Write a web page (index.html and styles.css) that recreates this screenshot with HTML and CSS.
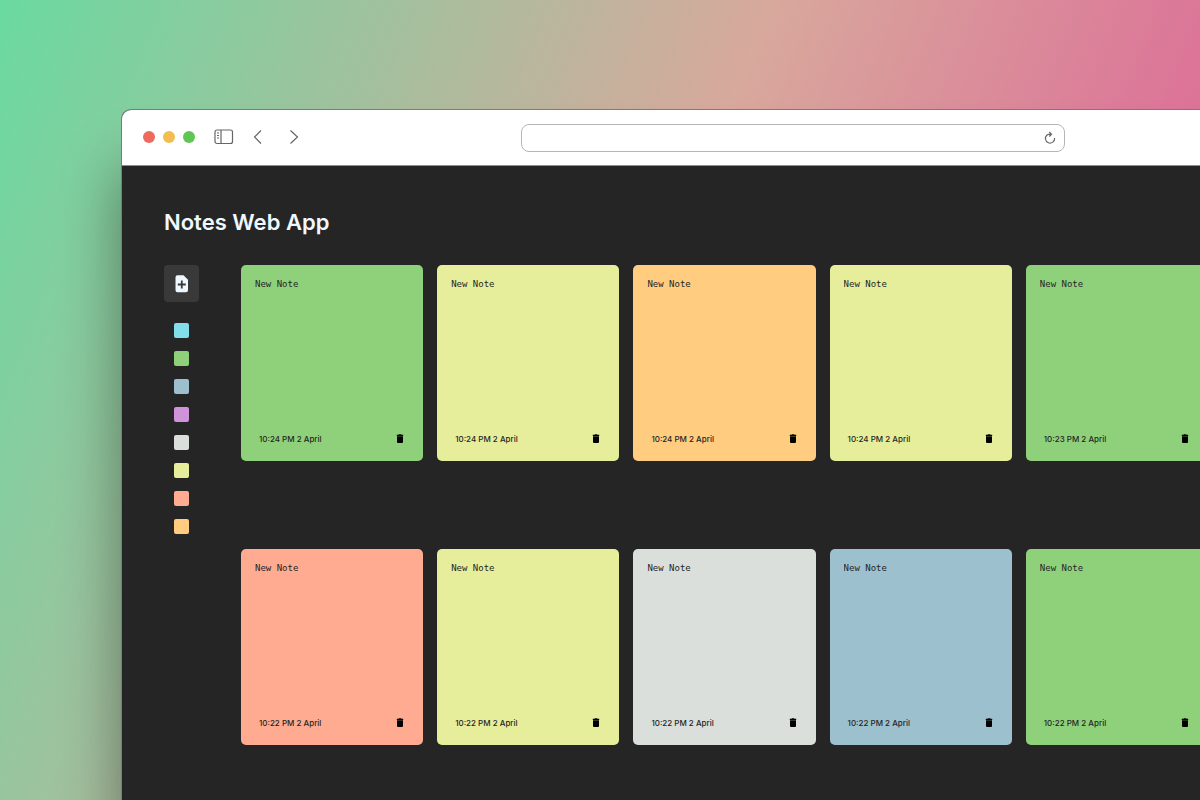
FILE: index.html
```html
<!DOCTYPE html>
<html lang="en">
<head>
<meta charset="utf-8">
<meta name="viewport" content="width=device-width, initial-scale=1">
<title>Notes Web App</title>
<link rel="stylesheet" href="styles.css">
</head>
<body>
<div class="window">
  <header class="toolbar">
    <div class="controls">
      <div class="lights"><span class="light red"></span><span class="light amber"></span><span class="light green"></span></div>
      <button class="tool" aria-label="Toggle sidebar"><svg width="20" height="16" viewBox="0 0 20 16"><rect x="1" y="1" width="17.500" height="13.500" rx="2"/><path d="M7 1v13.500M3 4h2M3 6.500h2M3 9h2"/></svg></button>
      <button class="tool" aria-label="Back"><svg width="10" height="16" viewBox="0 0 10 16"><path d="M8 1.500L1.500 8L8 14.500"/></svg></button>
      <button class="tool" aria-label="Forward"><svg width="10" height="16" viewBox="0 0 10 16"><path d="M1.500 1.500L8.500 8L1.500 14.500"/></svg></button>
    </div>
    <div class="address">
      <input class="url" type="text" aria-label="Address">
      <button class="reload" aria-label="Reload"><svg width="12" height="14" viewBox="0 0 12 14"><path d="M3 4A4.600 4.600 0 1 0 10.600 7M2.800 4.200Q4.500 3 7.300 3.200M5.200 1L7.500 3.200L5.300 5.500"/></svg></button>
    </div>
  </header>
  <main class="app">
    <h1 class="title">Notes Web App</h1>
    <div class="board">
      <aside class="palette">
        <button class="add" aria-label="Add note"><svg width="14" height="18" viewBox="0 0 14 18"><path fill="#f0f8ff" d="M2.500 .2h6L13 4.800v10.400a2 2 0 0 1-2 2H2.500a2 2 0 0 1-2-2V2.200a2 2 0 0 1 2-2z"/><path stroke="#3a3a3a" stroke-width="1.800" d="M6.800 5.500v8M2.800 9.500h8"/></svg></button>
        <button class="swatch cyan" aria-label="Cyan"></button>
        <button class="swatch leaf" aria-label="Green"></button>
        <button class="swatch blue" aria-label="Blue"></button>
        <button class="swatch violet" aria-label="Purple"></button>
        <button class="swatch grey" aria-label="Grey"></button>
        <button class="swatch lime" aria-label="Yellow"></button>
        <button class="swatch coral" aria-label="Coral"></button>
        <button class="swatch orange" aria-label="Orange"></button>
      </aside>
      <section class="notes" id="notes" aria-label="Notes"></section>
    </div>
  </main>
</div>
<script src="notes.js"></script>
</body>
</html>
```

FILE: notes.js
```js
const notes = [
  ["leaf", "10:24 PM 2 April"],
  ["lime", "10:24 PM 2 April"],
  ["orange", "10:24 PM 2 April"],
  ["lime", "10:24 PM 2 April"],
  ["leaf", "10:23 PM 2 April"],
  ["coral", "10:22 PM 2 April"],
  ["lime", "10:22 PM 2 April"],
  ["grey", "10:22 PM 2 April"],
  ["blue", "10:22 PM 2 April"],
  ["leaf", "10:22 PM 2 April"]
];

document.getElementById("notes").innerHTML = notes.map(([color, time]) => `
  <article class="note ${color}">
    <textarea class="text" aria-label="Note text">New Note</textarea>
    <footer class="meta">
      <time>${time}</time>
      <button class="delete" aria-label="Delete note"><svg width="8" height="10" viewBox="0 0 8 10"><path d="M.8 .8h1.700L3 .2h2l.5 .6h1.700v1.200H.8zM1 2.300h6V8Q7 9 6 9H2Q1 9 1 8z"/></svg></button>
    </footer>
  </article>`).join("");
```

FILE: styles.css
```css
* { box-sizing: border-box; }

body {
  margin: 0;
  min-height: 100vh;
  display: flex;
  overflow: hidden;
  padding: 109px 0 0 121px;
  background: linear-gradient(112deg, #6adaa0 0%, #d8a89c 51%, #dc7598 80%, #dc6c98 100%);
  font-family: Inter, "Liberation Sans", sans-serif;
}

button {
  display: block;
  padding: 0;
  border: 0;
  background: none;
}

svg { display: block; }

.window {
  flex: 1;
  margin-right: -264px;
  display: flex;
  flex-direction: column;
  border: 1px solid #777d79;
  border-bottom: 0;
  border-radius: 10px 0 0 0;
  background: #252525;
  box-shadow: 0 60px 60px rgba(0, 0, 0, 0.4);
  overflow: hidden;
}

.toolbar {
  display: grid;
  grid-template-columns: 1fr 544px 1fr;
  align-items: center;
  height: 56px;
  background: #fff;
  border-bottom: 1px solid #8d8d8d;
}

.controls {
  display: flex;
  align-items: center;
  gap: 19px;
  padding: 0 0 2px 21px;
}

.lights {
  display: flex;
  gap: 8px;
}

.light {
  width: 12px;
  height: 12px;
  border-radius: 50%;
}

.red { background: #ed6a5e; }
.amber { background: #f4bd4f; }
.green { background: #61c554; }

.tool svg,
.reload svg {
  fill: none;
  stroke: #666;
  stroke-width: 1.2;
}

.tool + .tool + .tool { margin-left: 7px; }

.address {
  display: flex;
  align-items: center;
  height: 28px;
  padding-right: 8px;
  border: 1px solid #b5b5b5;
  border-radius: 8px;
}

.url {
  flex: 1;
  border: 0;
  outline: 0;
  background: none;
}

.app {
  flex: 1;
  padding: 40px 255px 40px 42px;
}

.title {
  margin: 0 0 27px;
  font-size: 22px;
  line-height: 32px;
  font-weight: 600;
  color: #f0f8ff;
}

.board {
  display: flex;
  align-items: flex-start;
  gap: 42px;
}

.palette {
  display: flex;
  flex-direction: column;
  align-items: center;
  gap: 13px;
}

.add {
  display: grid;
  place-items: center;
  width: 35px;
  height: 37px;
  margin-bottom: 8px;
  border-radius: 4px;
  background: #393939;
}

.swatch {
  width: 15px;
  height: 15px;
  border-radius: 2px;
}

.notes {
  flex: 1;
  display: grid;
  grid-template-columns: repeat(5, 1fr);
  gap: 88px 14px;
}

.note {
  display: flex;
  flex-direction: column;
  height: 196px;
  padding: 13px 19px 16px 14px;
  border-radius: 5px;
}

.text {
  flex: 1;
  width: 100%;
  padding: 0;
  border: 0;
  outline: 0;
  resize: none;
  overflow: hidden;
  background: none;
  color: #252525;
  font: 9px/12px "DejaVu Sans Mono", monospace;
}

.meta {
  display: flex;
  align-items: center;
  justify-content: space-between;
  padding-left: 4px;
  font-size: 8px;
  line-height: 12px;
  font-weight: 500;
  color: #252525;
}

.cyan { background: #81deea; }
.leaf { background: #8fd17a; }
.blue { background: #9dc0cf; }
.violet { background: #ce93d9; }
.grey { background: #dadfdb; }
.lime { background: #e6ee9b; }
.coral { background: #ffab91; }
.orange { background: #ffcc80; }
```
